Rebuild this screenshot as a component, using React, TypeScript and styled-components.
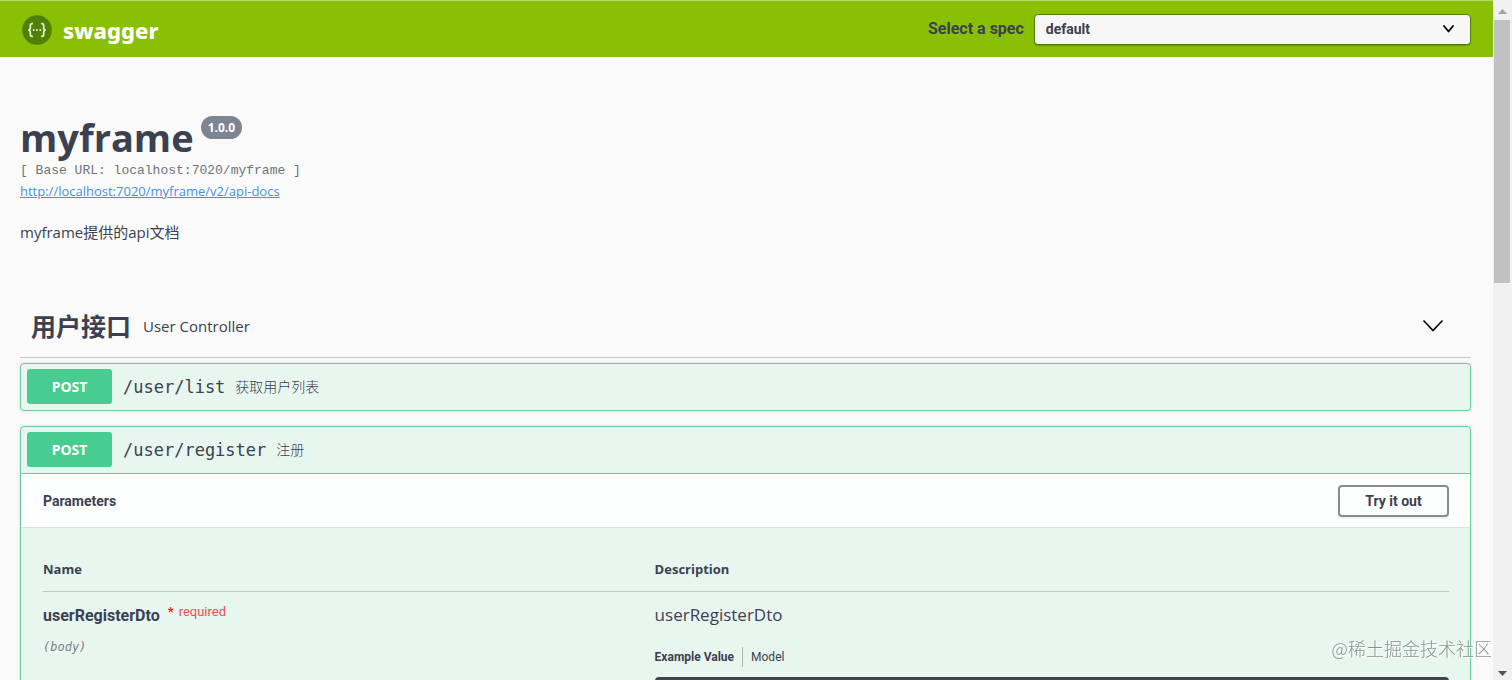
import React from 'react';
import styled, { createGlobalStyle } from 'styled-components';

const sans = `'Open Sans', 'Noto Sans CJK SC', sans-serif`;
const display = `Roboto, 'Noto Sans CJK SC', sans-serif`;
const mono = `'DejaVu Sans Mono', 'Noto Sans CJK SC', monospace`;
const ink = '#3b4151';
const green = '#49cc90';
const outline = '#6acca1';

const GlobalStyle = createGlobalStyle`
  * { box-sizing: border-box; }
  body { margin: 0; background: #fafafa; color: ${ink}; font-family: ${sans}; }
  h1, h2, h3, h4, p { margin: 0; }
`;

const Shell = styled.div`
  display: flex;
  height: 100vh;
  overflow: hidden;
`;

const Page = styled.div`
  flex: 1;
  min-width: 0;
  overflow: hidden;
`;

const Scrollbar = styled.div`
  display: flex;
  flex-direction: column;
  align-items: center;
  justify-content: space-between;
  width: 19px;
  padding: 9px 1px 4px;
  background: #f1f1f1;
`;

const Track = styled.div`
  flex: 1;
  align-self: stretch;
  margin: 6px 0 10px;
`;

const Thumb = styled.div`
  height: 41%;
  margin-right: 1px;
  background: #c1c1c1;
`;

const Topbar = styled.header`
  display: flex;
  align-items: center;
  justify-content: space-between;
  height: 57px;
  padding: 0 22px;
  border-top: 1px solid #b5dc6c;
  background: #89bf04;
`;

const Brand = styled.a`
  display: flex;
  align-items: center;
  gap: 11px;
  padding-top: 2px;
  color: #fff;
  font: 800 22px/30px 'Noto Sans', sans-serif;
  text-decoration: none;
`;

const SpecPicker = styled.div`
  display: flex;
  align-items: center;
  gap: 10px;
  width: 543px;
`;

const SpecLabel = styled.label`
  flex: none;
  font: 700 16px/30px ${display};
`;

const SelectWrap = styled.div`
  display: grid;
  flex: 1;
  align-items: center;

  > * { grid-area: 1 / 1; }
  > svg { justify-self: end; margin-right: 17px; pointer-events: none; }
`;

const SpecSelect = styled.select`
  width: 100%;
  height: 31px;
  padding: 0 40px 0 11px;
  appearance: none;
  border: 1px solid #547f00;
  border-radius: 4px;
  background: #f7f7f7;
  color: ${ink};
  font: 700 14px/24px ${display};
  box-shadow: 0 1px 1px rgba(60, 90, 0, 0.4);
`;

const Content = styled.main`
  padding: 0 22px 0 20px;
`;

const Info = styled.section`
  padding: 56px 0 52px;
`;

const Title = styled.h2`
  display: flex;
  align-items: flex-start;
  gap: 7px;
  height: 48px;
  font: 700 38px/48px ${sans};
`;

const Version = styled.span`
  margin-top: 3px;
  padding: 0 7px;
  border-radius: 12px;
  background: #7d8492;
  color: #fff;
  font: 700 12px/23px ${sans};
`;

const BaseUrl = styled.div`
  color: #6f737c;
  font: 400 13px/20px 'Liberation Mono', monospace;
`;

const DocsLink = styled.a`
  display: block;
  width: max-content;
  color: #4990e2;
  font-size: 13px;
  line-height: 20px;
`;

const Description = styled.p`
  margin-top: 19px;
  font-size: 15px;
  line-height: 24px;
`;

const TagHeader = styled.div`
  display: flex;
  align-items: center;
  height: 62px;
  padding: 0 28px 2px 11px;
  border-bottom: 1px solid #c5c7cb;
`;

const TagName = styled.h3`
  font: 700 25px/36px ${sans};
`;

const TagNote = styled.small`
  flex: 1;
  padding-left: 12px;
  font-size: 15px;
  line-height: 24px;
`;

const IconButton = styled.button`
  display: flex;
  padding: 0;
  border: 0;
  background: none;
  color: #000;
`;

const Operation = styled.article`
  margin: 5px 0 15px;
  border: 1px solid ${outline};
  border-radius: 4px;
  background: #e8f6f0;
  box-shadow: 0 0 3px rgba(0, 0, 0, 0.15);
`;

const Summary = styled.div<{ $open?: boolean }>`
  display: flex;
  align-items: center;
  height: ${({ $open }) => ($open ? 47 : 46)}px;
  padding: 0 6px 1px;
  border-bottom: ${({ $open }) => ($open ? `1px solid ${outline}` : '0')};
`;

const Method = styled.button`
  width: 85px;
  height: 35px;
  padding: 0;
  border: 0;
  border-radius: 3px;
  background: ${green};
  color: #fff;
  font: 700 14px/35px 'Noto Sans', sans-serif;
`;

const Path = styled.span`
  padding: 0 10px 0 11px;
  font: 400 17px/24px ${mono};
`;

const Note = styled.span`
  font-size: 14px;
  font-weight: 300;
  line-height: 24px;
`;

const SectionHeader = styled.div`
  display: flex;
  align-items: center;
  justify-content: space-between;
  height: 54px;
  padding: 0 21px 0 22px;
  border-bottom: 1px solid #dbe6e1;
  background: #fdfefe;
`;

const SectionTitle = styled.h4`
  font: 700 14px/24px ${display};
`;

const TryButton = styled.button`
  width: 111px;
  height: 32px;
  border: 2px solid #8c8c8c;
  border-radius: 4px;
  background: transparent;
  color: ${ink};
  font: 700 14px/24px ${display};
  box-shadow: 0 1px 2px rgba(0, 0, 0, 0.1);
`;

const TableWrap = styled.div`
  padding: 20px 21px 0 22px;
`;

const ParamTable = styled.table`
  width: 100%;
  table-layout: fixed;
  border-collapse: collapse;
`;

const HeadCell = styled.th<{ $width?: string }>`
  width: ${({ $width }) => $width ?? 'auto'};
  padding: 11px 0 12px;
  border-bottom: 1px solid #b9cbc5;
  font: 700 13px/20px ${sans};
  text-align: left;
`;

const Cell = styled.td`
  padding: 11px 0 0;
  vertical-align: top;
`;

const ParamName = styled.div`
  display: flex;
  font: 700 16px/26px ${display};
`;

const Required = styled.span`
  display: flex;
  gap: 5px;
  padding-left: 8px;
  color: #ff1414;
  font: 700 13px/17px ${display};

  > span { color: #f04c50; font-weight: 400; }
`;

const ParamIn = styled.div`
  margin-top: 8px;
  color: #7b817f;
  font: italic 400 12px/20px ${mono};
`;

const ParamText = styled.p`
  font-size: 17px;
  line-height: 24px;
`;

const Tabs = styled.div`
  display: flex;
  margin: 20px 0 10px;
`;

const Tab = styled.button<{ $active?: boolean }>`
  height: 20px;
  padding: 0 8px 0 0;
  border: 0;
  background: none;
  color: ${ink};
  font: ${({ $active }) => ($active ? 700 : 400)} 12px/20px ${display};

  & + & { padding-left: 8px; border-left: 1px solid #a9b8b3; }
`;

const Example = styled.pre`
  height: 240px;
  margin: 0;
  border-radius: 4px;
  background: #41444e;
`;

const Watermark = styled.div`
  position: fixed;
  right: 20px;
  bottom: 18px;
  color: rgba(120, 128, 124, 0.85);
  font: 300 18px/28px 'Noto Sans CJK SC', sans-serif;
  text-shadow: 1px 1px 0 #fff;
`;

const Logo = () => (
  <svg width="30" height="30" viewBox="0 0 30 30" fill="none" aria-hidden="true">
    <circle cx="15" cy="15" r="14.8" fill="#4f8008" />
    <path
      d="M10.9 8.6H10.2Q8.3 8.6 8.3 10.4V12.7Q8.3 14.8 6.3 15Q8.3 15.2 8.3 17.3V19.6Q8.3 21.4 10.2 21.4H10.9M19.1 8.6H19.8Q21.7 8.6 21.7 10.4V12.7Q21.7 14.8 23.7 15Q21.7 15.2 21.7 17.3V19.6Q21.7 21.4 19.8 21.4H19.1"
      stroke="#e6f3d0"
      strokeWidth="1.7"
    />
    <g fill="#e6f3d0">
      <circle cx="11.7" cy="15" r="1" />
      <circle cx="15" cy="15" r="1" />
      <circle cx="18.3" cy="15" r="1" />
    </g>
  </svg>
);

const Chevron = ({ width, height, stroke }: { width: number; height: number; stroke: number }) => (
  <svg width={width} height={height} viewBox={`0 0 ${width} ${height}`} fill="none" aria-hidden="true">
    <path
      d={`M1 1L${width / 2} ${height - 1.5}L${width - 1} 1`}
      stroke="#000"
      strokeWidth={stroke}
      strokeLinecap="round"
      strokeLinejoin="round"
    />
  </svg>
);

const Arrow = ({ up }: { up?: boolean }) => (
  <svg width="9" height="5" viewBox="0 0 9 5" aria-hidden="true">
    <path d={up ? 'M0 5L4.5 0L9 5Z' : 'M0 0L4.5 5L9 0Z'} fill={up ? '#a3a3a3' : '#505050'} />
  </svg>
);

export default function App() {
  return (
    <Shell>
      <GlobalStyle />
      <Page>
        <Topbar>
          <Brand href="#">
            <Logo />
            swagger
          </Brand>
          <SpecPicker>
            <SpecLabel htmlFor="spec">Select a spec</SpecLabel>
            <SelectWrap>
              <SpecSelect id="spec">
                <option>default</option>
              </SpecSelect>
              <Chevron width={11} height={8} stroke={1.8} />
            </SelectWrap>
          </SpecPicker>
        </Topbar>
        <Content>
          <Info>
            <Title>
              myframe
              <Version>1.0.0</Version>
            </Title>
            <BaseUrl>[ Base URL: localhost:7020/myframe ]</BaseUrl>
            <DocsLink href="#api-docs">http://localhost:7020/myframe/v2/api-docs</DocsLink>
            <Description>myframe提供的api文档</Description>
          </Info>
          <section>
            <TagHeader>
              <TagName>用户接口</TagName>
              <TagNote>User Controller</TagNote>
              <IconButton aria-label="Collapse operations">
                <Chevron width={20} height={12} stroke={1.7} />
              </IconButton>
            </TagHeader>
            <Operation>
              <Summary>
                <Method>POST</Method>
                <Path>/user/list</Path>
                <Note>获取用户列表</Note>
              </Summary>
            </Operation>
            <Operation>
              <Summary $open>
                <Method>POST</Method>
                <Path>/user/register</Path>
                <Note>注册</Note>
              </Summary>
              <SectionHeader>
                <SectionTitle>Parameters</SectionTitle>
                <TryButton>Try it out</TryButton>
              </SectionHeader>
              <TableWrap>
                <ParamTable>
                  <thead>
                    <tr>
                      <HeadCell $width="43.5%">Name</HeadCell>
                      <HeadCell>Description</HeadCell>
                    </tr>
                  </thead>
                  <tbody>
                    <tr>
                      <Cell>
                        <ParamName>
                          userRegisterDto
                          <Required>
                            * <span>required</span>
                          </Required>
                        </ParamName>
                        <ParamIn>(body)</ParamIn>
                      </Cell>
                      <Cell>
                        <ParamText>userRegisterDto</ParamText>
                        <Tabs>
                          <Tab $active>Example Value</Tab>
                          <Tab>Model</Tab>
                        </Tabs>
                        <Example />
                      </Cell>
                    </tr>
                  </tbody>
                </ParamTable>
              </TableWrap>
            </Operation>
          </section>
        </Content>
      </Page>
      <Scrollbar aria-hidden="true">
        <Arrow up />
        <Track>
          <Thumb />
        </Track>
        <Arrow />
      </Scrollbar>
      <Watermark>@稀土掘金技术社区</Watermark>
    </Shell>
  );
}
